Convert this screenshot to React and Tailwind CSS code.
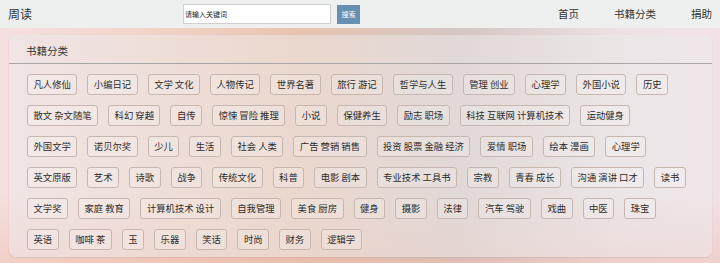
import React from "react";

const rows = [
  "凡人修仙", "小编日记", "文学 文化", "人物传记", "世界名著", "旅行 游记", "哲学与人生", "管理 创业", "心理学", "外国小说", "历史",
  "散文 杂文随笔", "科幻 穿越", "自传", "惊悚 冒险 推理", "小说", "保健养生", "励志 职场", "科技 互联网 计算机技术", "运动健身",
  "外国文学", "诺贝尔奖", "少儿", "生活", "社会 人类", "广告 营销 销售", "投资 股票 金融 经济", "爱情 职场", "绘本 漫画", "心理学",
  "英文原版", "艺术", "诗歌", "战争", "传统文化", "科普", "电影 剧本", "专业技术 工具书", "宗教", "青春 成长", "沟通 演讲 口才", "读书",
  "文学奖", "家庭 教育", "计算机技术 设计", "自我管理", "美食 厨房", "健身", "摄影", "法律", "汽车 驾驶", "戏曲", "中医", "珠宝",
  "英语", "咖啡 茶", "玉", "乐器", "笑话", "时尚", "财务", "逻辑学",
];

export default function App() {
  return (
    <div
      className="w-[720px] h-[263px] overflow-hidden flex flex-col text-[#333]"
      style={{ fontFamily: '"Noto Sans CJK SC", "Noto Sans", sans-serif' }}
    >
      <header className="h-[28px] shrink-0 bg-[#eef0ef] flex items-center pl-[8px] pr-[8px]">
        <div className="text-[12px] leading-none text-[#333]">周读</div>
        <div className="ml-[151px] flex items-center">
          <div className="w-[148px] h-[20px] bg-white border border-[#cfcfcf] flex items-center pl-[1px] text-[7px] text-[#222]">
            请输入关键词
          </div>
          <div className="ml-[6px] w-[23px] h-[19px] bg-[#6690b1] text-white text-[7px] flex items-center justify-center">
            搜索
          </div>
        </div>
        <nav className="ml-auto flex items-center gap-[35px] text-[10.5px] text-[#333]">
          <span>首页</span>
          <span>书籍分类</span>
          <span>捐助</span>
        </nav>
      </header>
      <main className="flex-1 relative bg-[linear-gradient(to_right,#f5e0e0_0%,#f2d4c8_20%,#e8c4b0_42%,#d4c6c2_64%,#ede0e2_85%,#f2e2e8_100%)] pl-[9px] pr-[8px] pt-[7px]">
        <div className="absolute inset-x-0 bottom-0 h-[70px] bg-[linear-gradient(to_bottom,transparent,rgba(240,180,165,0.4))] pointer-events-none" />
        <section className="relative h-[222px] rounded-[7px] bg-[rgba(236,234,233,0.52)] shadow-[0_1px_2px_rgba(0,0,0,0.08)]">
          <div className="h-[28px] flex items-center pl-[17px] pt-[3px] text-[10.5px] text-[#333]">书籍分类</div>
          <div className="h-px bg-[#a9a6a5]" />
          <div className="pl-[18px] pr-[26px] pt-[10px] flex flex-wrap gap-[10px]">
            {rows.map((t, i) => (
              <span
                key={i}
                className="inline-flex items-center h-[21px] px-[5.5px] border border-[#c6b8b0] rounded-[3px] bg-[rgba(255,255,255,0.2)] text-[9.33px] leading-none text-[#2d2d2d] whitespace-pre"
              >
                {t}
              </span>
            ))}
          </div>
        </section>
      </main>
    </div>
  );
}
